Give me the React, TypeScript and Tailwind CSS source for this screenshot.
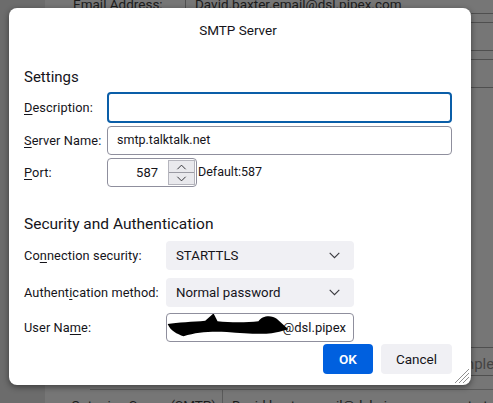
const uiFont = "font-['Roboto','Noto_Sans',sans-serif]";

function Chevron({ up = false, className = "" }: { up?: boolean; className?: string }) {
  return (
    <svg viewBox="0 0 14 8" className={className} fill="none" stroke="currentColor" strokeWidth="1.3">
      <path d={up ? "M1.5 7 L7 1.5 L12.5 7" : "M1.5 1 L7 6.5 L12.5 1"} />
    </svg>
  );
}

function Field({ u, rest, pre = "", children, labelW = "w-[83px]" }: { u: string; rest: string; pre?: string; children: React.ReactNode; labelW?: string }) {
  return (
    <div className="flex items-center">
      <div className={`${labelW} shrink-0 text-[12.75px] tracking-[0.1px] text-[#15141a] whitespace-nowrap`}>
        {pre}<span className="underline underline-offset-2">{u}</span>{rest}
      </div>
      {children}
    </div>
  );
}

function Select({ value }: { value: string }) {
  return (
    <div className="w-[188px] h-[29px] rounded-[4px] bg-[#f0f0f4] flex items-center justify-between pl-[10px] pr-[13px] text-[13.25px] text-[#15141a]">
      <span>{value}</span>
      <Chevron className="w-[13px] h-[7px] text-[#3a3a3f]" />
    </div>
  );
}

function BackRow({ className = "" }: { className?: string }) {
  return <div className={`border-b border-[#4f4f4f] ${className}`} />;
}

export default function App() {
  return (
    <div className={`${uiFont} relative w-[493px] h-[403px] overflow-hidden bg-[#767676] flex`}>
      <div className="w-[45px] h-full bg-[#6c6c6c]" />
      <div className="flex-1 relative">
        <div className="absolute top-[-6px] left-[28px] text-[13.5px] text-[#1c1c1c] whitespace-nowrap">Email Address:</div>
        <div className="absolute top-0 left-[140px] w-px h-[14px] bg-[#4f4f4f]" />
        <div className="absolute top-[-6px] left-[150px] text-[13.5px] text-[#1c1c1c] whitespace-nowrap">David.baxter.email@dsl.pipex.com</div>
        <div className="absolute left-[426px] right-0 top-0 flex flex-col">
          <BackRow className="h-[14px]" />
          <BackRow className="h-[9px]" />
          <BackRow className="h-[28px]" />
          <BackRow className="h-[9px]" />
          <BackRow className="h-[28px]" />
        </div>
        <div className="absolute left-[426px] right-0 top-[347px] h-[29px] border-y border-[#4f4f4f]" />
        <div className="absolute left-[45px] right-0 top-[389px] h-px bg-[#5a5a5a]" />
        <div className="absolute top-[353px] left-[416px] text-[15px] text-[#444] whitespace-nowrap">mple</div>
        <div className="absolute top-[395px] left-[26px] text-[13.5px] text-[#1c1c1c] whitespace-nowrap">Outgoing Server (SMTP):</div>
        <div className="absolute top-[390px] left-[177px] h-[20px] w-px bg-[#5a5a5a]" />
        <div className="absolute top-[395px] left-[187px] text-[13.5px] text-[#1c1c1c] whitespace-nowrap">David.baxter.email@dsl.pipex.com - smtp.t</div>
      </div>

      <div className="absolute left-[9px] top-[8px] w-[462px] h-[377px] bg-white rounded-[8px] shadow-[0_2px_6px_rgba(0,0,0,0.45)] pl-[15px] pr-[19px] pt-[13px] flex flex-col">
        <div className="text-center text-[13.5px] text-[#15141a] leading-[18px]">SMTP Server</div>
        <div className="mt-[28px] text-[15px] leading-[20px] text-[#15141a]">Settings</div>

        <div className="mt-[5px] flex flex-col gap-[3px]">
          <Field u="D" rest="escription:">
            <div className="flex-1 h-[31px] rounded-[4px] border-2 border-[#0a5ea8] bg-white" />
          </Field>
          <Field u="S" rest="erver Name:">
            <div className="flex-1 h-[29px] rounded-[4px] border border-[#8f8f9d] bg-white flex items-center pl-[9px] text-[12.5px] text-[#15141a]">smtp.talktalk.net</div>
          </Field>
          <Field u="P" rest="ort:">
            <div className="w-[90px] h-[29px] rounded-[4px] border border-[#8f8f9d] bg-white flex items-center justify-end text-[13px] text-[#15141a] pr-px">
              <span className="mr-[10px]">587</span>
              <div className="w-[27px] h-[25px] flex flex-col bg-[#e9e9ed] border border-[#b5b5bd] text-[#2f2f34]">
                <div className="flex-1 flex items-center justify-center border-b border-[#9a9aa3]"><Chevron up className="w-[11px] h-[6px]" /></div>
                <div className="flex-1 flex items-center justify-center"><Chevron className="w-[11px] h-[6px]" /></div>
              </div>
            </div>
            <span className="ml-px text-[12.5px] text-[#15141a]">Default:587</span>
          </Field>
        </div>

        <div className="mt-[27px] text-[15.5px] leading-[20px] text-[#15141a]">Security and Authentication</div>

        <div className="mt-[7px] flex flex-col gap-[8px]">
          <Field pre="Co" u="n" rest="nection security:" labelW="w-[142px]"><Select value="STARTTLS" /></Field>
          <Field pre="Authent" u="i" rest="cation method:" labelW="w-[142px]"><Select value="Normal password" /></Field>
          <div className="-mt-[2px]">
            <Field pre="User Na" u="m" rest="e:" labelW="w-[142px]">
              <div className="relative w-[188px] h-[29px] rounded-[4px] border border-[#8f8f9d] bg-white flex items-center justify-end pr-[7px] text-[13px] text-[#15141a] overflow-hidden">
                <span>@dsl.pipex</span>
                <svg viewBox="20 18 400 87" className="absolute left-0 top-0 w-[133px] h-[29px]" fill="#000">
                  <path d="M22 48 C50 42 100 42 135 38 L160 16 L172 40 C210 44 260 44 295 40 C305 22 335 20 350 32 C362 42 375 55 385 64 C365 70 350 74 335 76 C300 80 250 76 200 72 C150 70 110 72 70 85 C50 78 30 68 22 48Z" />
                </svg>
              </div>
            </Field>
          </div>
        </div>

        <div className="absolute right-[19px] bottom-[11px] flex gap-[8px] text-[13.5px]">
          <button className="w-[50px] h-[30px] rounded-[4px] bg-[#0060df] text-white font-semibold">OK</button>
          <button className="w-[71px] h-[30px] rounded-[4px] bg-[#f0f0f4] text-[#15141a]">Cancel</button>
        </div>

        <svg viewBox="0 0 16 16" className="absolute right-[1px] bottom-[1px] w-[16px] h-[16px]" fill="none" stroke="#8f8f8f" strokeWidth="1">
          <path d="M1 15 L15 1 M5 15 L15 5 M9 15 L15 9" />
        </svg>
      </div>
    </div>
  );
}
